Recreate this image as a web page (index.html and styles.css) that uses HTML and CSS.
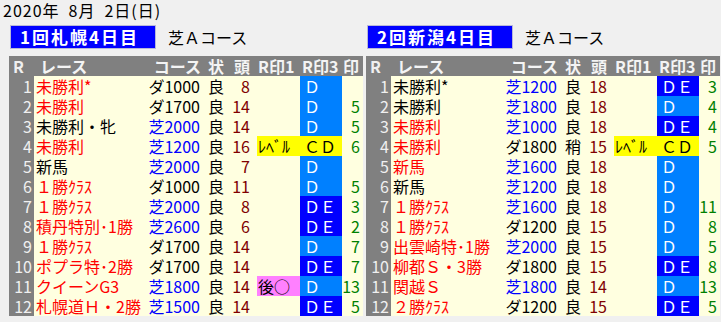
FILE: index.html
```html
<!DOCTYPE html>
<html lang="ja">
<head>
<meta charset="utf-8">
<link rel="stylesheet" href="styles.css">
</head>
<body>
<div class="date">2020年&ensp;8月&ensp;2日(日)</div>
<div class="panels">
  <section class="panel">
    <div class="panel-head"><span class="kai">1回札幌4日目</span><span class="turf">芝Ａコース</span></div>
    <table class="races">
      <thead><tr><th class="c-r">R</th><th class="c-name">レース</th><th class="c-course">コース</th><th class="c-cond">状</th><th class="c-num">頭</th><th class="c-m1">R印1</th><th class="c-m3">R印3</th><th class="c-mk">印</th></tr></thead>
      <tbody>
        <tr><td class="c-r">1</td><td class="c-name red">未勝利*</td><td class="c-course">ダ1000</td><td class="c-cond">良</td><td class="c-num">8</td><td class="c-m1"></td><td class="c-m3 lb">Ｄ</td><td class="c-mk"></td></tr>
        <tr><td class="c-r">2</td><td class="c-name red">未勝利</td><td class="c-course">ダ1700</td><td class="c-cond">良</td><td class="c-num">14</td><td class="c-m1"></td><td class="c-m3 lb">Ｄ</td><td class="c-mk">5</td></tr>
        <tr><td class="c-r">3</td><td class="c-name">未勝利・牝</td><td class="c-course turf">芝2000</td><td class="c-cond">良</td><td class="c-num">14</td><td class="c-m1"></td><td class="c-m3 lb">Ｄ</td><td class="c-mk">5</td></tr>
        <tr><td class="c-r">4</td><td class="c-name red">未勝利</td><td class="c-course turf">芝1200</td><td class="c-cond">良</td><td class="c-num">16</td><td class="c-m1 yl">ﾚﾍﾞﾙ</td><td class="c-m3 yl">ＣＤ</td><td class="c-mk">6</td></tr>
        <tr><td class="c-r">5</td><td class="c-name">新馬</td><td class="c-course turf">芝2000</td><td class="c-cond">良</td><td class="c-num">7</td><td class="c-m1"></td><td class="c-m3 lb">Ｄ</td><td class="c-mk"></td></tr>
        <tr><td class="c-r">6</td><td class="c-name red">１勝ｸﾗｽ</td><td class="c-course">ダ1000</td><td class="c-cond">良</td><td class="c-num">11</td><td class="c-m1"></td><td class="c-m3 lb">Ｄ</td><td class="c-mk">5</td></tr>
        <tr><td class="c-r">7</td><td class="c-name red">１勝ｸﾗｽ</td><td class="c-course turf">芝2000</td><td class="c-cond">良</td><td class="c-num">8</td><td class="c-m1"></td><td class="c-m3 db">ＤＥ</td><td class="c-mk">3</td></tr>
        <tr><td class="c-r">8</td><td class="c-name red">積丹特別･1勝</td><td class="c-course turf">芝2600</td><td class="c-cond">良</td><td class="c-num">6</td><td class="c-m1"></td><td class="c-m3 db">ＤＥ</td><td class="c-mk">2</td></tr>
        <tr><td class="c-r">9</td><td class="c-name red">１勝ｸﾗｽ</td><td class="c-course">ダ1700</td><td class="c-cond">良</td><td class="c-num">14</td><td class="c-m1"></td><td class="c-m3 lb">Ｄ</td><td class="c-mk">7</td></tr>
        <tr><td class="c-r">10</td><td class="c-name red">ポプラ特･2勝</td><td class="c-course">ダ1700</td><td class="c-cond">良</td><td class="c-num">14</td><td class="c-m1"></td><td class="c-m3 db">ＤＥ</td><td class="c-mk">7</td></tr>
        <tr><td class="c-r">11</td><td class="c-name red">クイーンG3</td><td class="c-course turf">芝1800</td><td class="c-cond">良</td><td class="c-num">14</td><td class="c-m1 mg">後○</td><td class="c-m3 lb">Ｄ</td><td class="c-mk">13</td></tr>
        <tr><td class="c-r">12</td><td class="c-name red">札幌道Ｈ・2勝</td><td class="c-course turf">芝1500</td><td class="c-cond">良</td><td class="c-num">14</td><td class="c-m1"></td><td class="c-m3 db">ＤＥ</td><td class="c-mk">5</td></tr>
      </tbody>
    </table>
  </section>
  <section class="panel">
    <div class="panel-head"><span class="kai">2回新潟4日目</span><span class="turf">芝Ａコース</span></div>
    <table class="races">
      <thead><tr><th class="c-r">R</th><th class="c-name">レース</th><th class="c-course">コース</th><th class="c-cond">状</th><th class="c-num">頭</th><th class="c-m1">R印1</th><th class="c-m3">R印3</th><th class="c-mk">印</th></tr></thead>
      <tbody>
        <tr><td class="c-r">1</td><td class="c-name">未勝利*</td><td class="c-course turf">芝1200</td><td class="c-cond">良</td><td class="c-num">18</td><td class="c-m1"></td><td class="c-m3 db">ＤＥ</td><td class="c-mk">3</td></tr>
        <tr><td class="c-r">2</td><td class="c-name">未勝利</td><td class="c-course turf">芝1800</td><td class="c-cond">良</td><td class="c-num">18</td><td class="c-m1"></td><td class="c-m3 lb">Ｄ</td><td class="c-mk">4</td></tr>
        <tr><td class="c-r">3</td><td class="c-name red">未勝利</td><td class="c-course turf">芝1000</td><td class="c-cond">良</td><td class="c-num">18</td><td class="c-m1"></td><td class="c-m3 db">ＤＥ</td><td class="c-mk">4</td></tr>
        <tr><td class="c-r">4</td><td class="c-name red">未勝利</td><td class="c-course">ダ1800</td><td class="c-cond">稍</td><td class="c-num">15</td><td class="c-m1 yl">ﾚﾍﾞﾙ</td><td class="c-m3 yl">ＣＤ</td><td class="c-mk">5</td></tr>
        <tr><td class="c-r">5</td><td class="c-name red">新馬</td><td class="c-course turf">芝1600</td><td class="c-cond">良</td><td class="c-num">18</td><td class="c-m1"></td><td class="c-m3 lb">Ｄ</td><td class="c-mk"></td></tr>
        <tr><td class="c-r">6</td><td class="c-name">新馬</td><td class="c-course turf">芝1200</td><td class="c-cond">良</td><td class="c-num">18</td><td class="c-m1"></td><td class="c-m3 lb">Ｄ</td><td class="c-mk"></td></tr>
        <tr><td class="c-r">7</td><td class="c-name red">１勝ｸﾗｽ</td><td class="c-course turf">芝1600</td><td class="c-cond">良</td><td class="c-num">18</td><td class="c-m1"></td><td class="c-m3 lb">Ｄ</td><td class="c-mk">11</td></tr>
        <tr><td class="c-r">8</td><td class="c-name red">１勝ｸﾗｽ</td><td class="c-course">ダ1200</td><td class="c-cond">良</td><td class="c-num">15</td><td class="c-m1"></td><td class="c-m3 lb">Ｄ</td><td class="c-mk">8</td></tr>
        <tr><td class="c-r">9</td><td class="c-name red">出雲崎特･1勝</td><td class="c-course turf">芝2000</td><td class="c-cond">良</td><td class="c-num">15</td><td class="c-m1"></td><td class="c-m3 lb">Ｄ</td><td class="c-mk">5</td></tr>
        <tr><td class="c-r">10</td><td class="c-name red">柳都Ｓ・3勝</td><td class="c-course">ダ1800</td><td class="c-cond">良</td><td class="c-num">15</td><td class="c-m1"></td><td class="c-m3 db">ＤＥ</td><td class="c-mk">8</td></tr>
        <tr><td class="c-r">11</td><td class="c-name red">関越Ｓ</td><td class="c-course turf">芝1800</td><td class="c-cond">良</td><td class="c-num">14</td><td class="c-m1"></td><td class="c-m3 lb">Ｄ</td><td class="c-mk">13</td></tr>
        <tr><td class="c-r">12</td><td class="c-name red">２勝ｸﾗｽ</td><td class="c-course">ダ1200</td><td class="c-cond">良</td><td class="c-num">15</td><td class="c-m1"></td><td class="c-m3 db">ＤＥ</td><td class="c-mk">5</td></tr>
      </tbody>
    </table>
  </section>
</div>
</body>
</html>
```

FILE: styles.css
```css
html, body {
  margin: 0;
  padding: 0;
}
body {
  background: #f0f0f0;
  font-family: "Noto Sans CJK JP", sans-serif;
  font-size: 16px;
  color: #000;
  width: 721px;
  height: 322px;
  overflow: hidden;
}
.date {
  height: 20px;
  line-height: 20px;
  padding-left: 3px;
  letter-spacing: 1px;
  white-space: pre;
}
.panels {
  display: flex;
  gap: 3px;
  padding-left: 9px;
  margin-top: 5px;
}
.panel {
  flex: 0 0 354px;
  width: 354px;
}
.panel-head {
  display: flex;
  align-items: center;
  height: 24px;
  padding-left: 1px;
  margin-bottom: 7px;
}
.kai {
  box-sizing: border-box;
  width: 146px;
  height: 24px;
  background: #0000ff;
  color: #fff;
  font-weight: bold;
  font-size: 17px;
  letter-spacing: 2px;
  line-height: 22px;
  padding-left: 9px;
  border: 1px solid #b8b8d8;
  white-space: nowrap;
}
.turf {
  margin-left: 12px;
}
.races {
  border-collapse: collapse;
  table-layout: fixed;
  width: 354px;
  background: #ffffe0;
}
.races th, .races td {
  box-sizing: border-box;
  padding: 0;
  height: 20px;
  line-height: 20px;
  white-space: nowrap;
  overflow: hidden;
}
.races th {
  background: #808080;
  color: #f4f4f4;
  font-weight: bold;
  text-align: left;
}
.races .c-r {
  width: 25px;
  background: #808080;
  color: #f0f0f0;
  text-align: right;
  padding-right: 2px;
}
.races th.c-r {
  text-align: left;
  padding-left: 4px;
  padding-right: 0;
}
.races .c-name { width: 112px; padding-left: 2px; }
.races th.c-name { padding-left: 6px; }
.races .c-course { width: 58px; text-align: right; padding-right: 4px; }
.races th.c-course { text-align: right; padding-right: 3px; }
.races .c-cond { width: 24px; text-align: center; }
.races th.c-cond { text-align: center; }
.races .c-num { width: 29px; text-align: right; padding-right: 7px; color: #800000; }
.races th.c-num { text-align: right; color: #f4f4f4; }
.races .c-m1 { width: 43px; padding-left: 1px; }
.races .c-m3 { width: 42px; padding-left: 4px; }
.races th.c-m3 { padding-left: 2px; }
.races .c-mk { width: 21px; text-align: right; padding-right: 3px; color: #008000; }
.races th.c-mk { text-align: left; padding-left: 1px; padding-right: 0; color: #f4f4f4; }
.races .red { color: #ff0000; }
.races td.turf { color: #0000ff; }
.races .lb { background: #0080ff; color: #fff; }
.races .db { background: #0000ff; color: #fff; }
.races .yl { background: #ffff00; color: #000; }
.races .mg { background: #ff80ff; color: #000; }
```
